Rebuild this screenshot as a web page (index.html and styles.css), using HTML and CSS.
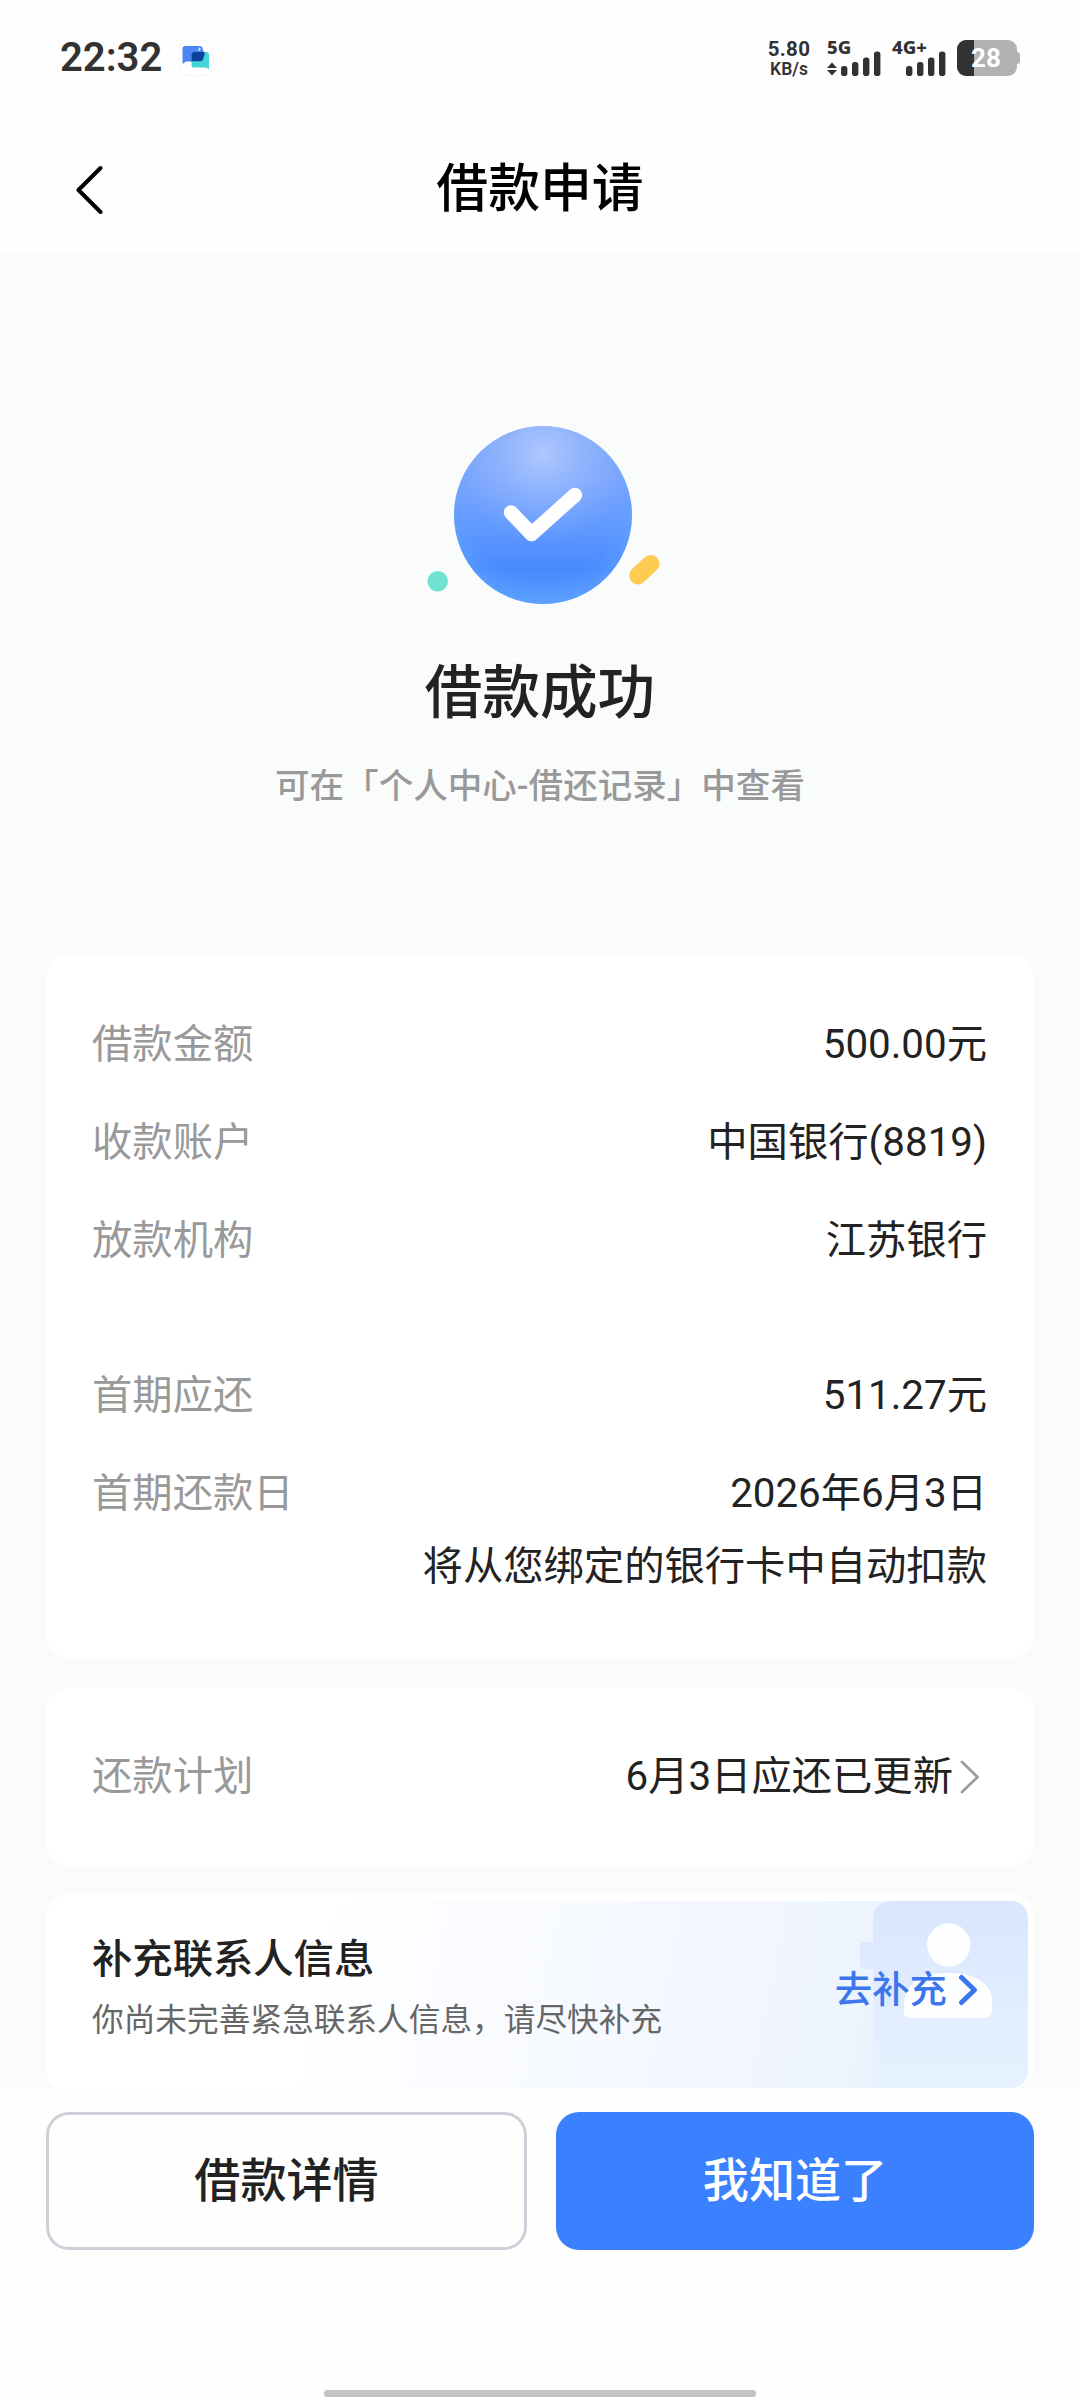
FILE: index.html
```html
<!DOCTYPE html>
<html lang="zh-CN">
<head>
<meta charset="utf-8">
<title>借款申请</title>
<link rel="stylesheet" href="styles.css">
</head>
<body>
<div class="screen">
  <div class="status">
    <span class="time">22:32</span>
    <svg class="app-icon" width="36" height="36" viewBox="0 0 36 36">
      <rect x="1" y="1" width="34" height="34" rx="8" fill="#fff" stroke="#fbf4f6"/>
      <path d="M4.500 8.500a2.500 2.500 0 0 1 2.500-2.500h15q2 0 2.600 2L26.500 15v6.500H8l-3.500 2.500z" fill="#4b87f3"/>
      <path d="M13.500 12h15a2.500 2.500 0 0 1 2.500 2.500v14.500l-3-1.500H15.500a2 2 0 0 1-2-2z" fill="#43d6d8"/>
      <path d="M13.500 14a2 2 0 0 1 2-2h11v3l-1.500 4.500q-.5 1.800-2 1.800h-9.500z" fill="#0b409c"/>
      <path d="M21.500 7.500v3.500M19.700 9.200h3.600" stroke="#cfe0ff" stroke-width="1"/>
    </svg>
    <div class="status-right">
      <div class="speed"><span class="speed-num">5.80</span><span class="speed-unit">KB/s</span></div>
      <div class="signal sim-one">
        <span class="net">5G</span>
        <svg width="54" height="26" viewBox="0 0 54 26" fill="#323232">
          <path d="M0 18L5 12.500L10 18zM0 20L5 25.500L10 20z"/>
          <rect x="14" y="16" width="6.400" height="10" rx="2.800"/><rect x="25" y="12" width="6.400" height="14" rx="2.800"/>
          <rect x="36" y="7.500" width="6.400" height="18.500" rx="2.800"/><rect x="47" y="1.500" width="6.400" height="24.500" rx="2.800"/>
        </svg>
      </div>
      <div class="signal sim-two">
        <span class="net">4G+</span>
        <svg width="54" height="26" viewBox="0 0 54 26" fill="#323232">
          <rect x="14" y="16" width="6.400" height="10" rx="2.800"/><rect x="25" y="12" width="6.400" height="14" rx="2.800"/>
          <rect x="36" y="7.500" width="6.400" height="18.500" rx="2.800"/><rect x="47" y="1.500" width="6.400" height="24.500" rx="2.800"/>
        </svg>
      </div>
      <div class="battery">
        <svg width="63" height="36" viewBox="0 0 63 36">
          <path d="M9 0H51a9 9 0 0 1 9 9V12q3 0 3 3v6q0 3-3 3V27a9 9 0 0 1-9 9H9a9 9 0 0 1-9-9V9a9 9 0 0 1 9-9z" fill="#b2b2b2"/>
          <path d="M9 0h8v36H9a9 9 0 0 1-9-9V9a9 9 0 0 1 9-9z" fill="#323232"/>
        </svg>
        <span class="level">28</span>
      </div>
    </div>
  </div>

  <header class="nav">
    <svg class="back" width="28" height="50" viewBox="0 0 28 50" fill="none" stroke="#000" stroke-width="4" stroke-linecap="round" stroke-linejoin="round"><path d="M25.500 3L3.500 25L25.500 47"/></svg>
    <h1 class="nav-title">借款申请</h1>
  </header>

  <main class="content">
    <section class="result">
      <svg width="240" height="190" viewBox="420 420 240 190">
        <defs>
          <linearGradient id="ball" x1="0" y1="0" x2="0" y2="1">
            <stop offset="0" stop-color="#86a9fa"/><stop offset=".3" stop-color="#7aa5fd"/><stop offset=".55" stop-color="#629aff"/><stop offset=".8" stop-color="#4a8aff"/><stop offset="1" stop-color="#5498ff"/>
          </linearGradient>
          <radialGradient id="shine" cx=".5" cy=".16" r=".5">
            <stop offset="0" stop-color="#b4ccff" stop-opacity=".9"/><stop offset="1" stop-color="#8fb2ff" stop-opacity="0"/>
          </radialGradient>
          <radialGradient id="rim" cx=".5" cy=".45" r=".56">
            <stop offset=".75" stop-color="#62a4ff" stop-opacity="0"/><stop offset="1" stop-color="#62a8ff" stop-opacity=".55"/>
          </radialGradient>
        </defs>
        <circle cx="543" cy="515" r="89" fill="url(#ball)"/>
        <circle cx="543" cy="515" r="89" fill="url(#shine)"/>
        <circle cx="543" cy="515" r="89" fill="url(#rim)"/>
        <path d="M511 512.500L531.500 534L575 495" fill="none" stroke="#fff" stroke-width="14.500" stroke-linecap="round" stroke-linejoin="round"/>
        <circle cx="437.700" cy="581.300" r="10.300" fill="#70e2d2"/>
        <path d="M638 575.700L650.700 563.700" stroke="#fecb53" stroke-width="17.500" stroke-linecap="round"/>
      </svg>
      <h2 class="result-title">借款成功</h2>
      <p class="result-tip">可在「个人中心-借还记录」中查看</p>
    </section>

    <section class="card detail">
      <div class="row"><span class="label">借款金额</span><span class="value">500.00元</span></div>
      <div class="row"><span class="label">收款账户</span><span class="value">中国银行(8819)</span></div>
      <div class="row"><span class="label">放款机构</span><span class="value">江苏银行</span></div>
      <div class="row group"><span class="label">首期应还</span><span class="value">511.27元</span></div>
      <div class="row"><span class="label">首期还款日</span><span class="value">2026年6月3日</span></div>
      <p class="note">将从您绑定的银行卡中自动扣款</p>
    </section>

    <section class="card plan">
      <span class="label">还款计划</span>
      <span class="value">6月3日应还已更新</span>
      <svg width="20" height="34" viewBox="0 0 20 34" fill="none" stroke="#999b9f" stroke-width="2.700" stroke-linecap="round" stroke-linejoin="round"><path d="M2 2L17.500 17L2 32"/></svg>
    </section>

    <section class="card banner">
      <svg class="banner-art" width="982" height="187" viewBox="0 0 982 187">
        <defs>
          <linearGradient id="wash" gradientUnits="userSpaceOnUse" x1="270" y1="50" x2="960" y2="190">
            <stop offset="0" stop-color="#fff"/><stop offset=".4" stop-color="#f6f9ff"/><stop offset="1" stop-color="#e8f1fe"/>
          </linearGradient>
          <linearGradient id="book" x1="0" y1="0" x2="0" y2="1">
            <stop offset="0" stop-color="#dae6fe"/><stop offset=".6" stop-color="#e2edff"/><stop offset="1" stop-color="#e7f2ff"/>
          </linearGradient>
        </defs>
        <rect width="982" height="187" rx="17" fill="url(#wash)"/>
        <path d="M845 0H965a17 17 0 0 1 17 17V170a17 17 0 0 1-17 17H827V68H818q-4 0-4-4V45q0-4 4-4H827V18a18 18 0 0 1 18-18z" fill="url(#book)"/>
        <circle cx="902.700" cy="44" r="21.700" fill="#fdfeff"/>
        <path d="M858 111V104C858 84 874 72 899 72H905C930 72 946 84 946 99V109q0 8-8 8H865q-7 0-7-6z" fill="#fdfeff"/>
      </svg>
      <div class="banner-text">
        <h3 class="banner-title">补充联系人信息</h3>
        <p class="banner-sub">你尚未完善紧急联系人信息，请尽快补充</p>
      </div>
      <a class="banner-link">去补充<svg width="20" height="32" viewBox="0 0 20 32" fill="none" stroke="#3b76ec" stroke-width="5" stroke-linecap="round" stroke-linejoin="round"><path d="M3.500 3.500L16.500 16L3.500 28.500"/></svg></a>
    </section>
  </main>

  <footer class="footer">
    <div class="buttons">
      <button class="btn ghost">借款详情</button>
      <button class="btn primary">我知道了</button>
    </div>
    <div class="home-bar"></div>
  </footer>
</div>
</body>
</html>
```
FILE: styles.css
```css
* { box-sizing: border-box; margin: 0; padding: 0; }
body {
  font-family: Roboto, "Noto Sans CJK SC", sans-serif;
  background: #fefefe;
  color: #222;
}
svg { display: block; flex: none; }
.screen { width: 1080px; height: 2400px; display: flex; flex-direction: column; overflow: hidden; }

.status { height: 116px; padding: 0 60px 0 60px; display: flex; align-items: center; color: #323232; }
.time { font-size: 40px; font-weight: 600; line-height: 48px; }
.app-icon { margin-left: 16px; }
.status-right { margin-left: auto; display: flex; height: 36px; }
.speed { width: 42px; display: flex; flex-direction: column; align-items: center; font-weight: 700; margin-right: 17px; }
.speed-num { font-size: 20.500px; line-height: 18px; letter-spacing: .3px; white-space: nowrap; }
.speed-unit { font-size: 17.500px; line-height: 22px; font-weight: 600; white-space: nowrap; }
.signal { height: 36px; display: flex; flex-direction: column; justify-content: space-between; }
.net { font: 800 18.500px/14px "Noto Sans", sans-serif; white-space: nowrap; }
.signal svg { margin-top: -4px; }
.sim-one { width: 54px; margin-right: 11px; }
.sim-two { width: 54px; margin-right: 11px; }
.battery { display: grid; width: 63px; align-items: center; }
.battery > * { grid-area: 1 / 1; }
.level { color: #fff; font-size: 26px; line-height: 36px; font-weight: 700; padding-left: 14px; z-index: 1; }

.nav { height: 136px; padding: 12px 75px 0; display: grid; grid-template-columns: 28px 1fr 28px; align-items: center; }
.nav-title { font-size: 51.840px; line-height: 72px; font-weight: 500; color: #000; text-align: center; }

.content { height: 1837px; background: #fafcfb; padding: 0 46px; overflow: hidden; }
.result { height: 703px; padding-top: 168px; display: flex; flex-direction: column; align-items: center; }
.result > svg { margin-left: -.5px; }
.result-title { margin-top: 44px; font-size: 57.600px; line-height: 80px; font-weight: 500; }
.result-tip { margin-top: 27px; font-size: 34.560px; line-height: 50px; font-weight: 500; color: #999; }

.card { background: #fff; border-radius: 23px; font-size: 40.320px; line-height: 58px; }
.detail { height: 703px; padding: 61px 47px 0 46px; }
.row { display: flex; justify-content: space-between; margin-bottom: 40px; }
.row.group { margin-top: 97px; }
.label { color: #999; }
.note { margin-top: -25px; text-align: right; }
.plan { height: 178px; margin-top: 30px; padding: 0 54px 0 46px; display: flex; align-items: center; }
.plan .value { margin-left: auto; margin-right: 7px; }
.banner { height: 195px; margin-top: 28px; padding: 0 56px 4px 46px; display: flex; align-items: center; justify-content: space-between; position: relative; }
.banner-art { position: absolute; left: 0; top: 7px; }
.banner-text, .banner-link { position: relative; }
.banner-title { font-size: 40.320px; line-height: 58px; font-weight: 500; }
.banner-sub { font-size: 31.680px; line-height: 48px; margin-top: 8px; margin-bottom: 3px; color: #666; }
.banner-link { display: flex; align-items: center; gap: 11px; font-size: 37.440px; font-weight: 500; color: #3b76ec; padding-top: 1px; }

.footer { flex: 1; padding: 23px 46px 3px; display: flex; flex-direction: column; background: #fefefe; }
.buttons { display: grid; grid-template-columns: 481px 478px; justify-content: space-between; }
.btn { height: 138px; border-radius: 23px; border: 0; font: 500 46.080px/64px Roboto, "Noto Sans CJK SC", sans-serif; color: #222; }
.ghost { background: #fefefe; border: 3px solid #cfcfd9; }
.primary { background: #3b81ff; color: #fff; }
.home-bar { width: 432px; height: 7px; border-radius: 4px; background: #c3c3c3; margin: auto auto 0; }
```
